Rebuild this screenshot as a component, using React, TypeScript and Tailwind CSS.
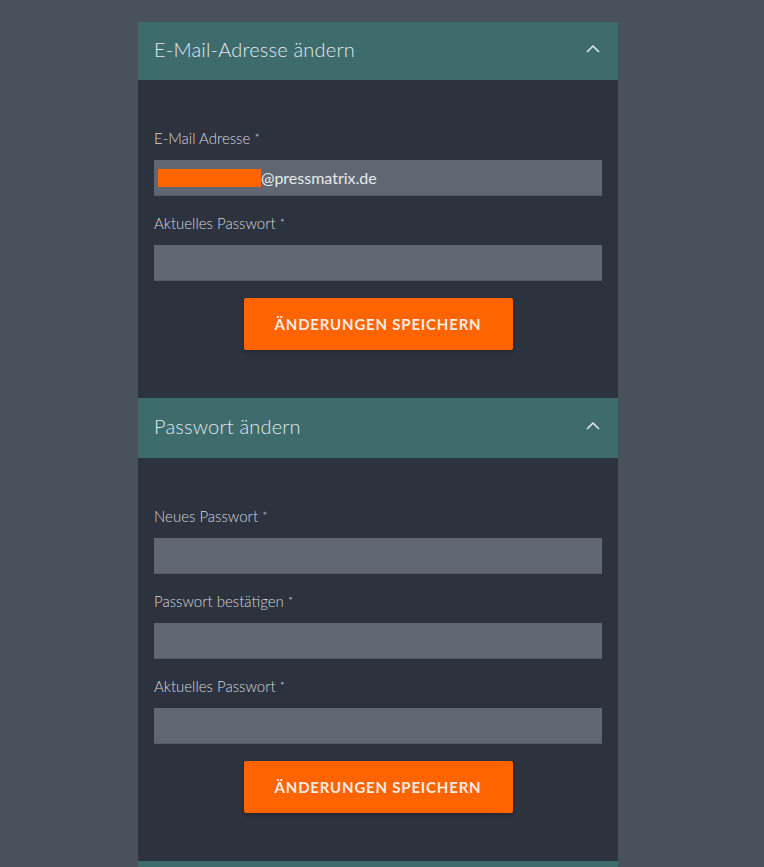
import React from "react";

const font = { fontFamily: '"Source Sans Pro", Lato, "Noto Sans", sans-serif' };

function Chevron() {
  return (
    <svg width="16" height="10" viewBox="0 0 16 10" fill="none">
      <path d="M2 8 L8 2 L14 8" stroke="#e6ecec" strokeWidth="1.5" />
    </svg>
  );
}

function Header({ title, h }: { title: string; h: string }) {
  return (
    <div className={`flex items-center justify-between bg-[#3e6b6c] pl-4 pr-[17px] pb-[5px] ${h}`}>
      <span className="text-[20px] font-light text-[#e3e9e9] tracking-[0.2px]">{title}</span>
      <Chevron />
    </div>
  );
}

function Field({ label, children }: { label: string; children?: React.ReactNode }) {
  return (
    <div className="flex flex-col">
      <label className="h-5 text-[15px] leading-5 font-light text-[#d3d7db]">
        {label} <span className="text-[12px] relative -top-[2px]">*</span>
      </label>
      <div className="mt-3 h-9 bg-[#5f6872] border-b border-[#545d66] flex items-center">{children}</div>
    </div>
  );
}

function Button() {
  return (
    <div className="flex justify-center mt-[17px]">
      <button className="w-[269px] h-[52px] bg-[#ff6400] rounded-[2px] text-[#f4ece6] text-[15px] font-bold tracking-[0.8px] shadow-[0_2px_4px_rgba(0,0,0,0.2)]">
        ÄNDERUNGEN SPEICHERN
      </button>
    </div>
  );
}

export default function App() {
  return (
    <div className="min-h-[867px] w-full bg-[#49525b] flex justify-center pt-[22px] pr-2" style={font}>
      <div className="w-[480px] flex flex-col">
        <Header title="E-Mail-Adresse ändern" h="h-[58px]" />
        <div className="bg-[#2c323e] px-4 pt-12 pb-12 flex flex-col">
          <Field label="E-Mail Adresse">
            <div className="ml-1 w-[103px] h-[18px] bg-[#ff6400]" />
            <span className="text-[16px] font-normal text-[#e8eaec]">@pressmatrix.de</span>
          </Field>
          <div className="mt-[17px]">
            <Field label="Aktuelles Passwort" />
          </div>
          <Button />
        </div>
        <Header title="Passwort ändern" h="h-[60px]" />
        <div className="bg-[#2c323e] px-4 pt-12 pb-12 flex flex-col">
          <Field label="Neues Passwort" />
          <div className="mt-[17px]">
            <Field label="Passwort bestätigen" />
          </div>
          <div className="mt-[17px]">
            <Field label="Aktuelles Passwort" />
          </div>
          <Button />
        </div>
        <div className="h-[6px] bg-[#3e6b6c]" />
      </div>
    </div>
  );
}
